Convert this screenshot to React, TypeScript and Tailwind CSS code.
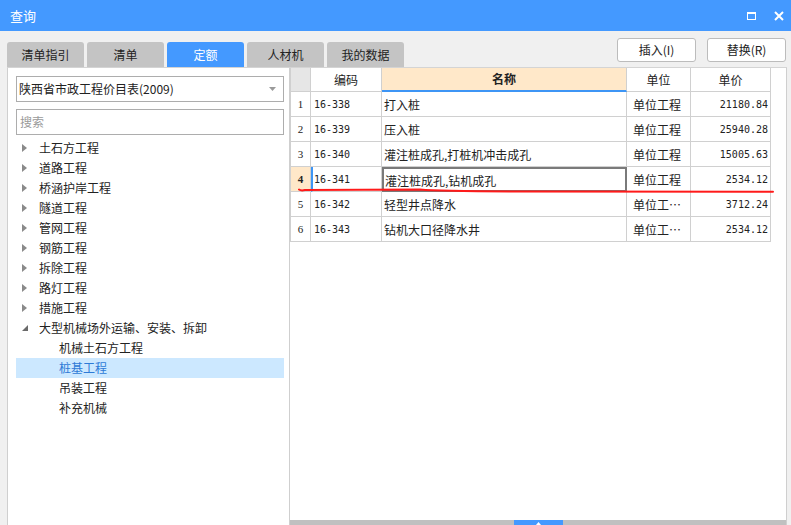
import React from "react";

const cjk = { fontFamily: '"Noto Sans CJK SC", "Noto Sans", sans-serif' };
const mono = { fontFamily: '"DejaVu Sans Mono", "Liberation Mono", monospace' };

const tabs = ["清单指引", "清单", "定额", "人材机", "我的数据"];

type TreeItem = { label: string; level: number; state?: "closed" | "open" | "leaf"; selected?: boolean };
const tree: TreeItem[] = [
  { label: "土石方工程", level: 0, state: "closed" },
  { label: "道路工程", level: 0, state: "closed" },
  { label: "桥涵护岸工程", level: 0, state: "closed" },
  { label: "隧道工程", level: 0, state: "closed" },
  { label: "管网工程", level: 0, state: "closed" },
  { label: "钢筋工程", level: 0, state: "closed" },
  { label: "拆除工程", level: 0, state: "closed" },
  { label: "路灯工程", level: 0, state: "closed" },
  { label: "措施工程", level: 0, state: "closed" },
  { label: "大型机械场外运输、安装、拆卸", level: 0, state: "open" },
  { label: "机械土石方工程", level: 1, state: "leaf" },
  { label: "桩基工程", level: 1, state: "leaf", selected: true },
  { label: "吊装工程", level: 1, state: "leaf" },
  { label: "补充机械", level: 1, state: "leaf" },
];

const rows = [
  { n: "1", code: "16-338", name: "打入桩", unit: "单位工程", price: "21180.84" },
  { n: "2", code: "16-339", name: "压入桩", unit: "单位工程", price: "25940.28" },
  { n: "3", code: "16-340", name: "灌注桩成孔,打桩机冲击成孔", unit: "单位工程", price: "15005.63" },
  { n: "4", code: "16-341", name: "灌注桩成孔,钻机成孔", unit: "单位工程", price: "2534.12", sel: true },
  { n: "5", code: "16-342", name: "轻型井点降水", unit: "单位工…", price: "3712.24" },
  { n: "6", code: "16-343", name: "钻机大口径降水井", unit: "单位工…", price: "2534.12" },
];

function Arrow({ state }: { state?: string }) {
  if (state === "closed")
    return (
      <svg width="5" height="8" viewBox="0 0 5 8" className="ml-[6px] mr-[12px]">
        <path d="M0 0 L5 4 L0 8 Z" fill="#8a8a8a" />
      </svg>
    );
  if (state === "open")
    return (
      <svg width="6" height="6" viewBox="0 0 6 6" className="ml-[6px] mr-[11px]">
        <path d="M6 0 L6 6 L0 6 Z" fill="#6a6a6a" />
      </svg>
    );
  return null;
}

export default function App() {
  return (
    <div className="relative flex h-[525px] w-[791px] flex-col overflow-hidden bg-[#f0f0f0] text-[12px] text-[#222]" style={cjk}>
      {/* title bar */}
      <div className="flex h-[31px] items-center bg-[#4499ff] pl-[10px] pr-[4px] text-white">
        <span className="text-[13px]">查询</span>
        <div className="ml-auto flex items-center">
          <div className="mr-[18px] h-[8px] w-[9px] border-[1.5px] border-t-[2.5px] border-white" />
          <svg width="10" height="10" viewBox="0 0 10 10" className="mr-[3px]">
            <path d="M1 1 L9 9 M9 1 L1 9" stroke="white" strokeWidth="2" />
          </svg>
        </div>
      </div>

      {/* toolbar */}
      <div className="flex h-[36px] pl-[7px] pr-[5px]">
        <div className="flex items-end gap-[3px]">
          {tabs.map((t) => (
            <div
              key={t}
              className={`flex h-[25px] w-[77px] items-center justify-center rounded-t-[3px] text-[12px] ${
                t === "定额" ? "bg-[#4499ff] text-white" : "bg-[#c4c4c4] text-[#222]"
              }`}
            >
              {t}
            </div>
          ))}
        </div>
        <div className="ml-auto mt-[7px] flex gap-[11px]">
          <div className="flex h-[24px] w-[79px] items-center justify-center rounded-[3px] border border-[#bcbcbc] bg-white">插入(I)</div>
          <div className="flex h-[24px] w-[79px] items-center justify-center rounded-[3px] border border-[#bcbcbc] bg-white">替换(R)</div>
        </div>
      </div>

      {/* content */}
      <div className="ml-[7px] mr-[4px] flex flex-1 border-t border-[#d4d4d4]">
        {/* left panel */}
        <div className="flex w-[283px] flex-col border-l border-r border-[#cfcfcf] bg-white pl-[8px] pr-[5px] pt-[8px]">
          <div className="flex h-[26px] items-center border border-[#adadad] pl-[2px] pr-[7px]">
            <span>陕西省市政工程价目表(2009)</span>
            <svg width="7" height="4" viewBox="0 0 7 4" className="ml-auto">
              <path d="M0 0 L7 0 L3.5 4 Z" fill="#9a9a9a" />
            </svg>
          </div>
          <div className="mt-[7px] flex h-[26px] items-center border border-[#adadad] pl-[3px] text-[#9a9a9a]">搜索</div>
          <div className="mt-[3px] flex flex-col">
            {tree.map((it) => (
              <div
                key={it.label}
                className={`flex h-[20px] items-center ${it.selected ? "bg-[#cce8ff] text-[#2e7ad6]" : ""}`}
              >
                {it.level === 0 ? <Arrow state={it.state} /> : <div className="w-[43px]" />}
                <span>{it.label}</span>
              </div>
            ))}
          </div>
        </div>

        {/* right grid */}
        <div className="flex flex-1 flex-col border-r border-[#cfcfcf] bg-white">
          <div className="flex-1">
            <div className="grid grid-cols-[21px_71px_245px_64px_80px]">
              <div className="h-[24px] border-b border-l border-r border-[#d0d0d0] bg-[#e6e6e6]" />
              <div className="flex h-[24px] items-center justify-center border-b border-r border-[#d0d0d0]">编码</div>
              <div className="flex h-[24px] items-center justify-center border-b-2 border-r border-b-[#3d95f5] border-r-[#d0d0d0] bg-[#ffe8c9] font-bold">名称</div>
              <div className="flex h-[24px] items-center justify-center border-b border-r border-[#d0d0d0]">单位</div>
              <div className="flex h-[24px] items-center justify-center border-b border-r border-[#d0d0d0]">单价</div>
              {rows.map((r) => (
                <React.Fragment key={r.n}>
                  <div
                    className={`flex h-[25px] items-center justify-center border-b border-l border-r border-[#d0d0d0] pt-[1px] text-[11px] ${
                      r.sel ? "bg-[#ffe8c9] font-bold" : ""
                    }`}
                    style={{ fontFamily: '"Liberation Serif", serif' }}
                  >
                    {r.n}
                  </div>
                  <div
                    className={`flex h-[25px] items-center border-b border-r border-[#d0d0d0] pt-[1px] text-[10px] ${
                      r.sel ? "border-l-2 border-l-[#3d95f5] pl-[1px]" : "pl-[3px]"
                    }`}
                    style={mono}
                  >
                    {r.code}
                  </div>
                  <div
                    className={`flex h-[25px] items-center whitespace-nowrap pt-[2px] ${
                      r.sel ? "border-2 border-[#7a7a7a] pl-[1px]" : "border-b border-r border-[#d0d0d0] pl-[2px]"
                    }`}
                  >
                    {r.name}
                  </div>
                  <div className="flex h-[25px] items-center whitespace-nowrap border-b border-r border-[#d0d0d0] pl-[6px] pt-[2px]">{r.unit}</div>
                  <div className="flex h-[25px] items-center justify-end border-b border-r border-[#d0d0d0] pr-[2px] pt-[1px] text-[10px]" style={mono}>
                    {r.price}
                  </div>
                </React.Fragment>
              ))}
            </div>
          </div>
          <div className="relative flex h-[5px] justify-center bg-[#c0c0c0]">
            <div className="flex h-[5px] w-[49px] items-end justify-center bg-[#4499ff]">
              <svg width="5" height="3" viewBox="0 0 5 3">
                <path d="M0 3 L2.5 0 L5 3 Z" fill="white" />
              </svg>
            </div>
          </div>
        </div>
      </div>

      {/* red annotation stroke */}
      <svg className="pointer-events-none absolute left-0 top-0" width="791" height="525">
        <path
          d="M299 189.5 Q301 191 305 190 L420 189.6 Q440 191.5 520 191.5 L773 191.8"
          stroke="#ff1a1a"
          strokeWidth="2"
          fill="none"
          strokeLinecap="round"
        />
      </svg>
    </div>
  );
}
